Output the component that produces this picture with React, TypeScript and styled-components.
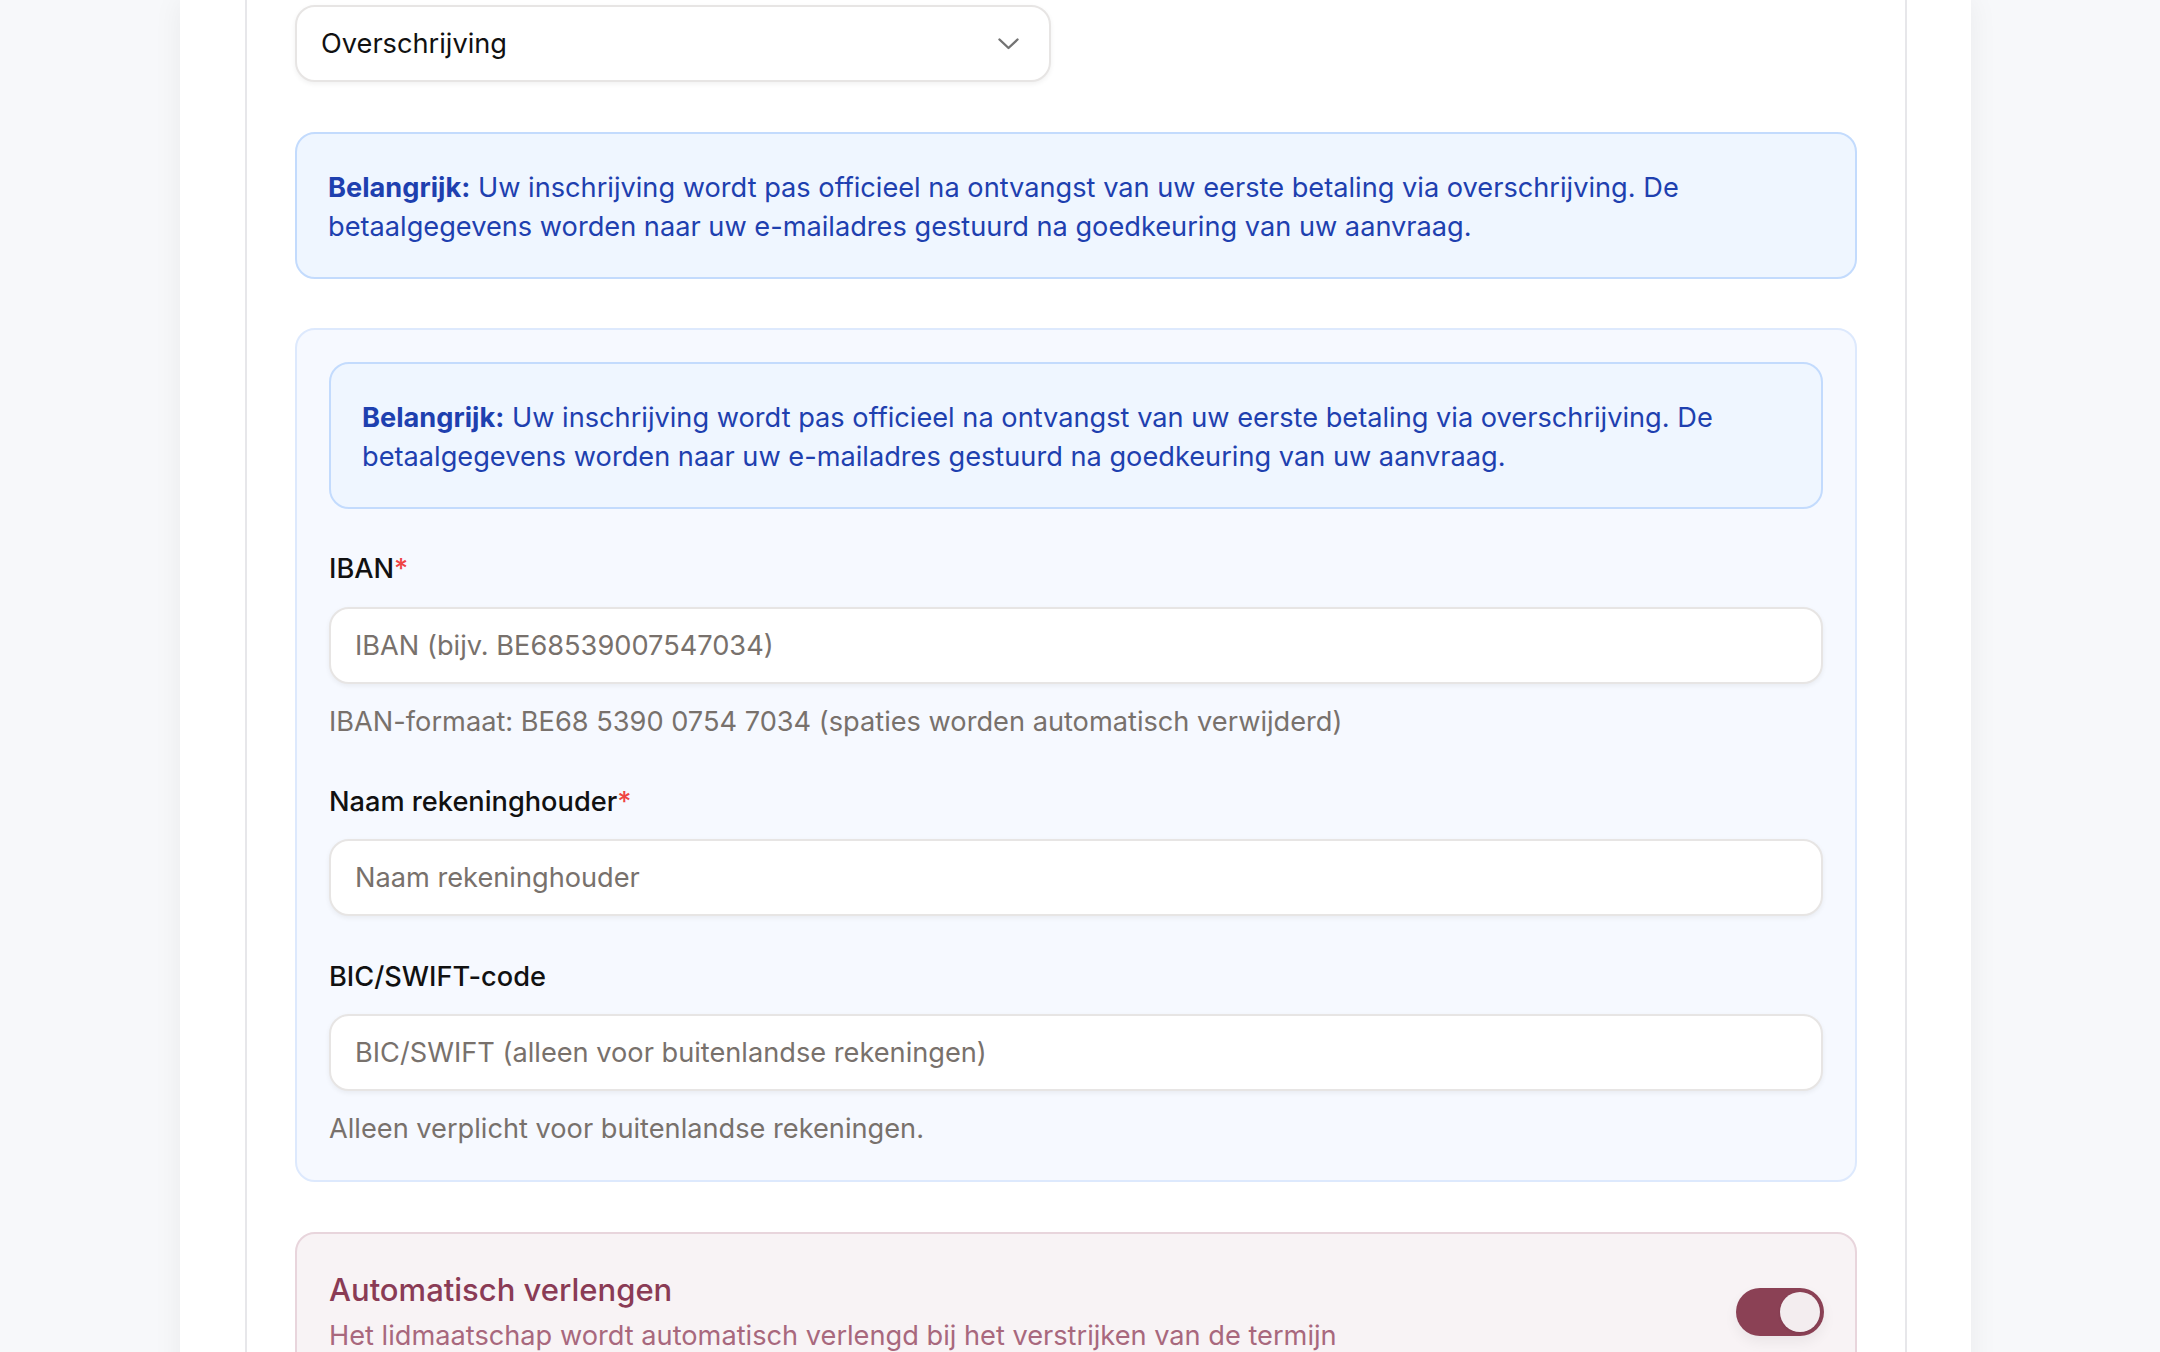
import React from "react";
import styled, { createGlobalStyle } from "styled-components";

const GlobalStyle = createGlobalStyle`
  html, body {
    margin: 0;
    padding: 0;
    background: #f7f8fa;
    font-family: "Inter", "Noto Sans", sans-serif;
    color: #1c1917;
    -webkit-font-smoothing: antialiased;
  }
  * { box-sizing: border-box; }
  body { overflow: hidden; }
`;

const Page = styled.div`
  min-height: 1352px;
  padding-left: 180px;
  display: flex;
  align-items: stretch;
`;

const Card = styled.div`
  width: 1791px;
  min-height: 1352px;
  background: #ffffff;
  box-shadow: 0 0 28px rgba(15, 23, 42, 0.06);
  padding: 0 64px 0 65px;
  display: flex;
`;

const Section = styled.div`
  flex: 1;
  border-left: 2px solid #e7e7ea;
  border-right: 2px solid #e7e7ea;
  padding: 5px 48px 0 48px;
  display: flex;
  flex-direction: column;
  gap: 49.6px;
`;

const SelectBox = styled.div`
  width: 756px;
  height: 77px;
  flex: none;
  border: 2px solid #e7e5e4;
  border-radius: 20px;
  background: #ffffff;
  box-shadow: 0 2px 5px rgba(0, 0, 0, 0.06);
  padding: 0 30px 0 24px;
  display: flex;
  align-items: center;
  justify-content: space-between;
  font-size: 27.2px;
  color: #111111;
`;

const InfoBox = styled.div`
  background: #eff6ff;
  border: 2px solid #c3dbfd;
  border-radius: 20px;
  padding: 35px 31px 30.2px 31px;
  font-size: 27.2px;
  line-height: 38.9px;
  color: #1e40af;

  strong {
    font-weight: 700;
  }
`;

const BankPanel = styled.div`
  background: #f6f9ff;
  border: 2px solid #dde9fd;
  border-radius: 20px;
  padding: 32px 32px 31px 32px;
  display: flex;
  flex-direction: column;
  gap: 39.2px;
`;

const Field = styled.div`
  display: flex;
  flex-direction: column;
`;

const Label = styled.label`
  font-size: 27.2px;
  line-height: 38.9px;
  font-weight: 500;
  color: #111111;
  padding-top: 2px;
  margin-bottom: 17.3px;
`;

const Req = styled.span`
  color: #ef4444;
`;

const Input = styled.input`
  height: 77px;
  width: 100%;
  border: 2px solid #e7e5e4;
  border-radius: 20px;
  background: #ffffff;
  box-shadow: 0 2px 5px rgba(0, 0, 0, 0.06);
  padding: 0 24px;
  font-family: inherit;
  font-size: 27.2px;
  color: #1c1917;
  outline: none;

  &::placeholder {
    color: #78716c;
  }
`;

const Help = styled.p`
  margin: 19.5px 0 0 0;
  font-size: 27.2px;
  line-height: 38.9px;
  color: #78716c;
`;

const RenewCard = styled.div`
  background: #f8f3f5;
  border: 2px solid #e8d5dc;
  border-radius: 20px;
  padding: 33px 31px 33px 32px;
  display: flex;
  align-items: center;
  justify-content: space-between;
  gap: 24px;
`;

const RenewText = styled.div`
  display: flex;
  flex-direction: column;
`;

const RenewTitle = styled.div`
  font-size: 31px;
  line-height: 46.6px;
  font-weight: 500;
  color: #8a3b55;
`;

const RenewSub = styled.div`
  margin-top: 4px;
  font-size: 27.2px;
  line-height: 38.9px;
  color: #a8687d;
`;

const Toggle = styled.div<{ $on: boolean }>`
  width: 88px;
  height: 48px;
  flex: none;
  border-radius: 24px;
  background: ${(p) => (p.$on ? "#8b4155" : "#d6d3d1")};
  box-shadow: 0 6px 14px rgba(0, 0, 0, 0.06);
  padding: 4px;
  display: flex;
  justify-content: ${(p) => (p.$on ? "flex-end" : "flex-start")};
`;

const Knob = styled.div`
  width: 40px;
  height: 40px;
  border-radius: 50%;
  background: #f3edef;
  box-shadow: 0 1px 3px rgba(0, 0, 0, 0.1);
`;

const Chevron = () => (
  <svg width="21" height="12" viewBox="0 0 21 12" fill="none">
    <path
      d="M1.5 1.5 L10.5 10 L19.5 1.5"
      stroke="#737373"
      strokeWidth="2.4"
      strokeLinecap="round"
      strokeLinejoin="round"
    />
  </svg>
);

const infoText = (
  <>
    <strong>Belangrijk:</strong> Uw inschrijving wordt pas officieel na ontvangst van uw eerste
    betaling via overschrijving. De betaalgegevens worden naar uw e-mailadres gestuurd na
    goedkeuring van uw aanvraag.
  </>
);

export default function App() {
  return (
    <>
      <GlobalStyle />
      <Page>
        <Card>
          <Section>
            <SelectBox>
              <span>Overschrijving</span>
              <Chevron />
            </SelectBox>

            <InfoBox>{infoText}</InfoBox>

            <BankPanel>
              <InfoBox>{infoText}</InfoBox>

              <Field>
                <Label>
                  IBAN<Req>*</Req>
                </Label>
                <Input placeholder="IBAN (bijv. BE68539007547034)" />
                <Help>IBAN-formaat: BE68 5390 0754 7034 (spaties worden automatisch verwijderd)</Help>
              </Field>

              <Field>
                <Label>
                  Naam rekeninghouder<Req>*</Req>
                </Label>
                <Input placeholder="Naam rekeninghouder" />
              </Field>

              <Field>
                <Label>BIC/SWIFT-code</Label>
                <Input placeholder="BIC/SWIFT (alleen voor buitenlandse rekeningen)" />
                <Help>Alleen verplicht voor buitenlandse rekeningen.</Help>
              </Field>
            </BankPanel>

            <RenewCard>
              <RenewText>
                <RenewTitle>Automatisch verlengen</RenewTitle>
                <RenewSub>Het lidmaatschap wordt automatisch verlengd bij het verstrijken van de termijn</RenewSub>
              </RenewText>
              <Toggle $on={true}>
                <Knob />
              </Toggle>
            </RenewCard>
          </Section>
        </Card>
      </Page>
    </>
  );
}
